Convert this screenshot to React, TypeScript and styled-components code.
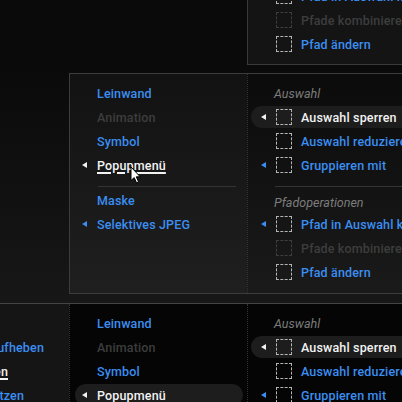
import React from "react";
import styled, { createGlobalStyle } from "styled-components";

const GlobalStyle = createGlobalStyle`
  html, body { margin: 0; padding: 0; background: #0a0a0a; }
  body { font-family: Roboto, "Liberation Sans", Arial, sans-serif; }
  * { box-sizing: border-box; }
`;

type Tone = "blue" | "white" | "dim";

const toneColor: Record<Tone, string> = {
  blue: "#3b8ef2",
  white: "#f2f2f2",
  dim: "#3d3d3d",
};

const Screen = styled.div`
  position: relative;
  width: 402px;
  height: 402px;
  overflow: hidden;
  display: flex;
  flex-direction: column;
  background: #0a0a0a;
`;

const Band = styled.div`
  display: grid;
  grid-template-columns: 69px 178px 1fr;
  flex: none;
`;

const TopBand = styled(Band)`
  height: 65px;
`;

const TopPanel = styled.div`
  grid-column: 3;
  display: flex;
  flex-direction: column;
  justify-content: flex-end;
  padding-bottom: 8px;
  overflow: hidden;
  background: #141414;
  border-left: 1px solid #3a3a3a;
  border-bottom: 1px solid #3a3a3a;
`;

const MiddleBand = styled(Band)`
  padding: 8px 0 9px;
  background: linear-gradient(#0a0a0a, #171717);
`;

const Popup = styled.div`
  grid-column: 2 / span 2;
  height: 221px;
  display: grid;
  grid-template-columns: 177px 1fr;
  border: 1px solid #3c3c3c;
  border-right: none;
  overflow: hidden;
`;

const BottomBand = styled(Band)`
  flex: 1;
  border-top: 1px solid #444;
  overflow: hidden;
`;

const Column = styled.div<{ $bg: string; $dotted?: boolean }>`
  display: flex;
  flex-direction: column;
  padding-top: 7px;
  background: ${(p) => p.$bg};
  border-left: ${(p) => (p.$dotted ? "1px dotted #333" : "none")};
  overflow: hidden;
  min-width: 0;
`;

const ClipRow = styled.div<{ $right: number }>`
  display: flex;
  flex: none;
  justify-content: flex-end;
  align-items: center;
  height: 24px;
  padding-right: ${(p) => p.$right}px;
  white-space: nowrap;
`;

const Row = styled.div<{ $active?: boolean; $side: "left" | "right" }>`
  display: flex;
  align-items: center;
  flex: none;
  height: 22px;
  margin: 1px 0;
  margin-left: ${(p) => (p.$side === "left" ? 5 : 3)}px;
  margin-right: ${(p) => (p.$side === "left" ? 4 : -40)}px;
  padding-left: ${(p) => (p.$side === "left" ? 7 : 10)}px;
  border-radius: 11px;
  background: ${(p) => (p.$active ? "#1d1d1d" : "transparent")};
  white-space: nowrap;
`;

const ArrowSlot = styled.span`
  width: 15px;
  flex: none;
  display: flex;
  align-items: center;
`;

const Triangle = styled.span<{ $tone: Tone }>`
  width: 0;
  height: 0;
  border-top: 3.5px solid transparent;
  border-bottom: 3.5px solid transparent;
  border-right: 5px solid ${(p) => toneColor[p.$tone]};
`;

const Check = styled.span<{ $dim?: boolean }>`
  width: 16px;
  height: 16px;
  flex: none;
  margin-right: 9px;
  border: 1px dashed ${(p) => (p.$dim ? "#3e3e3e" : "#b4b4b4")};
`;

const Label = styled.span<{ $tone: Tone; $underline?: boolean }>`
  flex: none;
  font-size: 12.5px;
  font-weight: 500;
  letter-spacing: 0.15px;
  color: ${(p) => toneColor[p.$tone]};
  text-decoration: ${(p) => (p.$underline ? "underline" : "none")};
  text-underline-offset: 2px;
  text-decoration-thickness: 1.5px;
`;

const Header = styled.div<{ $gap?: boolean }>`
  display: flex;
  flex: none;
  align-items: center;
  height: ${(p) => (p.$gap ? 20 : 24)}px;
  margin-top: ${(p) => (p.$gap ? 5 : 0)}px;
  padding-left: 26px;
  font-size: 12.5px;
  font-style: italic;
  color: #7c7c7c;
  white-space: nowrap;
`;

const Divider = styled.div<{ $side: "left" | "right" }>`
  height: 1px;
  flex: none;
  background: #333;
  margin: ${(p) => (p.$side === "left" ? "9px 11px 1px 28px" : "9px 0 0 27px")};
`;

const Cursor = styled.svg`
  position: absolute;
  left: 130px;
  top: 166px;
`;

type Item = {
  text: string;
  tone: Tone;
  sub?: boolean;
  active?: boolean;
  underline?: boolean;
};

const LeftItem = ({ item }: { item: Item }) => (
  <Row $side="left" $active={item.active}>
    <ArrowSlot>{item.sub && <Triangle $tone={item.tone === "blue" ? "blue" : "white"} />}</ArrowSlot>
    <Label $tone={item.tone} $underline={item.underline}>
      {item.text}
    </Label>
  </Row>
);

const RightItem = ({ item }: { item: Item }) => (
  <Row $side="right" $active={item.active}>
    <ArrowSlot>{item.sub && <Triangle $tone={item.tone === "blue" ? "blue" : "white"} />}</ArrowSlot>
    <Check $dim={item.tone === "dim"} />
    <Label $tone={item.tone}>{item.text}</Label>
  </Row>
);

const docItems = (hover: boolean): Item[] => [
  { text: "Leinwand", tone: "blue" },
  { text: "Animation", tone: "dim" },
  { text: "Symbol", tone: "blue" },
  { text: "Popupmenü", tone: "white", sub: true, underline: hover, active: !hover },
];

const selectItems: Item[] = [
  { text: "Auswahl sperren", tone: "white", sub: true, active: true },
  { text: "Auswahl reduzieren", tone: "blue" },
  { text: "Gruppieren mit", tone: "blue", sub: true },
];

const pathItems: Item[] = [
  { text: "Pfad in Auswahl konvertieren", tone: "blue", sub: true },
  { text: "Pfade kombinieren", tone: "dim" },
  { text: "Pfad ändern", tone: "blue" },
];

export default function App() {
  return (
    <>
      <GlobalStyle />
      <Screen>
        <TopBand>
          <TopPanel>
            {pathItems.map((it) => (
              <RightItem key={it.text} item={it} />
            ))}
          </TopPanel>
        </TopBand>

        <MiddleBand>
          <Popup>
            <Column $bg="linear-gradient(#121212, #1f1f1f)">
              {docItems(true).map((it) => (
                <LeftItem key={it.text} item={it} />
              ))}
              <Divider $side="left" />
              <LeftItem item={{ text: "Maske", tone: "blue" }} />
              <LeftItem item={{ text: "Selektives JPEG", tone: "blue", sub: true }} />
            </Column>
            <Column $bg="linear-gradient(#0b0b0b, #1a1a1a)" $dotted>
              <Header>Auswahl</Header>
              {selectItems.map((it) => (
                <RightItem key={it.text} item={it} />
              ))}
              <Divider $side="right" />
              <Header $gap>Pfadoperationen</Header>
              {pathItems.map((it) => (
                <RightItem key={it.text} item={it} />
              ))}
            </Column>
          </Popup>
        </MiddleBand>

        <BottomBand>
          <Column $bg="#151515">
            <ClipRow $right={69} />
            <ClipRow $right={25}>
              <Label $tone="blue">Gruppierung aufheben</Label>
            </ClipRow>
            <ClipRow $right={61}>
              <Label $tone="white" $underline>
                Anordnen
              </Label>
            </ClipRow>
            <ClipRow $right={45}>
              <Label $tone="blue">Ersetzen</Label>
            </ClipRow>
          </Column>
          <Column $bg="#050505" $dotted>
            {docItems(false).map((it) => (
              <LeftItem key={it.text} item={it} />
            ))}
          </Column>
          <Column $bg="#050505" $dotted>
            <Header>Auswahl</Header>
            {selectItems.map((it) => (
              <RightItem key={it.text} item={it} />
            ))}
          </Column>
        </BottomBand>

        <Cursor width="11" height="18" viewBox="0 0 11 18">
          <path
            d="M1 1 L1 14.5 L4.2 11.6 L6.6 17 L8.6 16.1 L6.3 10.8 L10.2 10.8 Z"
            fill="#fff"
            stroke="#000"
            strokeWidth="1"
            strokeLinejoin="round"
          />
        </Cursor>
      </Screen>
    </>
  );
}
